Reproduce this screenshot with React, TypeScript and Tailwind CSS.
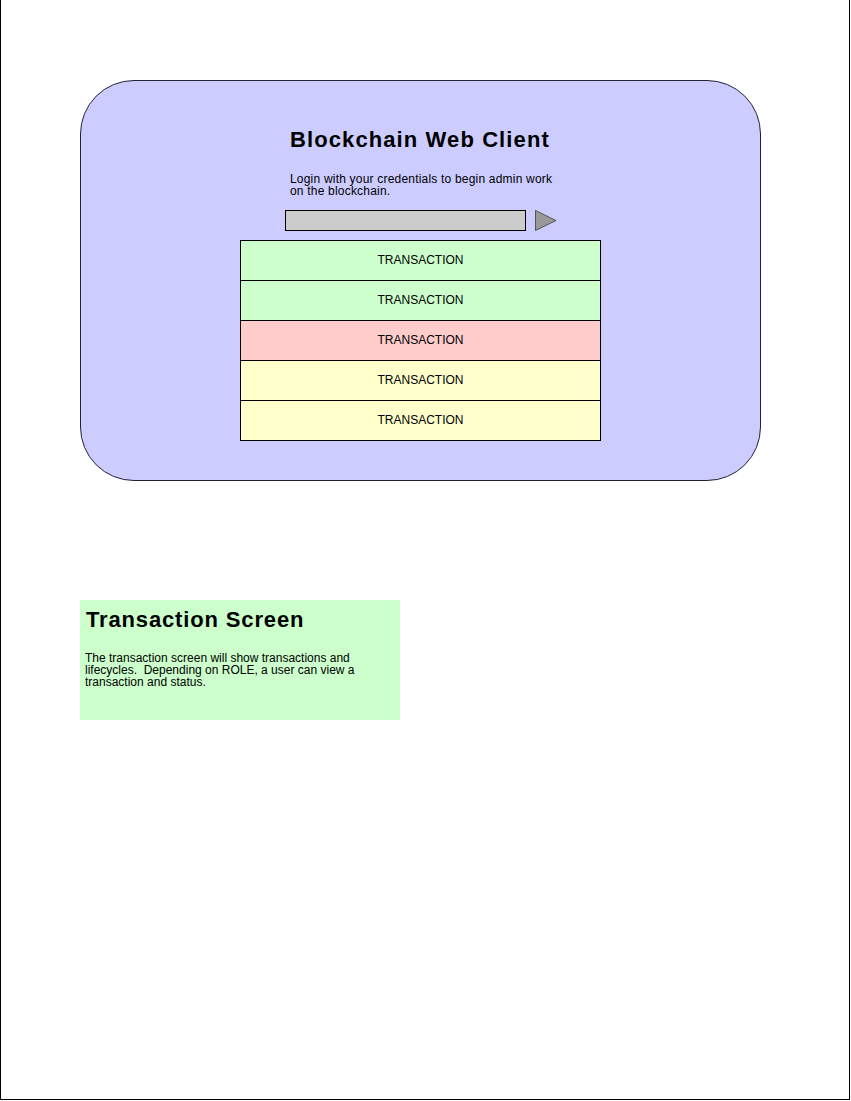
import React from "react";

const rows = [
  "bg-[#ccffcc]",
  "bg-[#ccffcc]",
  "bg-[#ffcccc]",
  "bg-[#ffffcc]",
  "bg-[#ffffcc]",
];

export default function App() {
  return (
    <div
      className="w-[850px] h-[1100px] border-l border-r border-b border-black bg-white text-black flex flex-col"
      style={{ fontFamily: '"Liberation Sans", Arial, sans-serif' }}
    >
      <div className="ml-[79px] mt-[80px] w-[681px] h-[401px] rounded-[54px] border border-[#222233] bg-[#ccccff] flex flex-col">
        <div className="ml-[209px] mt-[46px] text-[22px] leading-[26px] font-bold tracking-[1.1px]">
          Blockchain Web Client
        </div>
        <div className="ml-[209px] mt-[20px] w-[268px] text-[12px] leading-[12px] tracking-[0.2px]">
          Login with your credentials to begin admin work on the blockchain.
        </div>
        <div className="ml-[204px] mt-[13px] flex items-start gap-[9px]">
          <div className="w-[241px] h-[21px] border border-black bg-[#cccccc]" />
          <svg width="23" height="21" viewBox="0 0 23 21" className="block">
            <polygon points="0.5,0.5 0.5,20.5 21,10.5" fill="#999999" stroke="#555555" strokeWidth="1" />
          </svg>
        </div>
        <div className="ml-[159px] mt-[9px] w-[361px] border-x border-b border-black flex flex-col">
          {rows.map((c, i) => (
            <div
              key={i}
              className={`h-[40px] border-t border-black ${c} flex items-center justify-center text-[12px] pb-[2px]`}
            >
              TRANSACTION
            </div>
          ))}
        </div>
      </div>
      <div className="ml-[79px] mt-[119px] w-[320px] h-[120px] bg-[#ccffcc] flex flex-col">
        <div className="ml-[6px] mt-[7px] text-[22px] leading-[26px] font-bold tracking-[0.85px]">
          Transaction Screen
        </div>
        <div className="ml-[5px] mt-[19px] w-[300px] text-[12px] leading-[12px]">
          The transaction screen will show transactions and lifecycles.&nbsp; Depending on ROLE, a user can view a transaction and status.
        </div>
      </div>
    </div>
  );
}
